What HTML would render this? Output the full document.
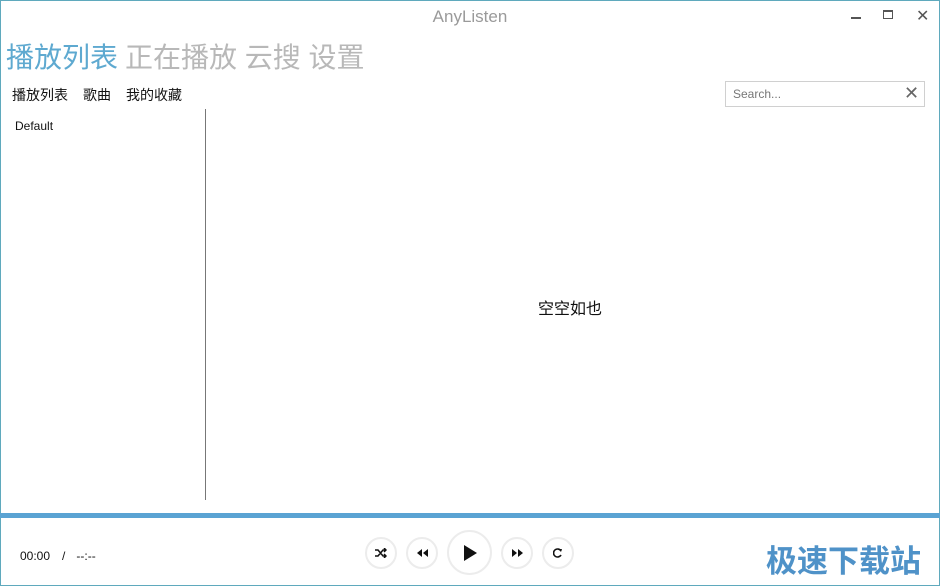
<!DOCTYPE html>
<html><head><meta charset="utf-8"><style>
*{margin:0;padding:0;box-sizing:border-box}
body{width:940px;height:586px;overflow:hidden;background:#fff;font-family:"Liberation Sans","Noto Sans CJK SC",sans-serif;position:relative}
.frame{position:absolute;left:0;top:0;width:940px;height:586px;border:1px solid #5fa9bd}
.abs{position:absolute;white-space:nowrap}
.btn{position:absolute;border-radius:50%;border:2px solid #ececec;background:#fff;display:flex;align-items:center;justify-content:center}
</style></head><body>
<div class="frame"></div>
<div class="abs" style="left:0;width:940px;top:7px;text-align:center;font-size:17px;color:#9a9a9a">AnyListen</div>
<div class="abs" style="left:851px;top:17px;width:10px;height:2px;background:#555"></div>
<div class="abs" style="left:883px;top:10px;width:10px;height:9px;border:1px solid #555;border-top:2px solid #555"></div>
<div class="abs" style="left:916px;top:6px;font-size:16px;color:#555">✕</div>
<div class="abs" style="left:6px;top:36px;font-size:28px;color:#5ea9d0">播放列表</div>
<div class="abs" style="left:125px;top:36px;font-size:28px;color:#b8b8b8">正在播放 云搜 设置</div>
<div class="abs" style="left:12px;top:85px;font-size:14px;color:#111">播放列表</div>
<div class="abs" style="left:83px;top:85px;font-size:14px;color:#111">歌曲</div>
<div class="abs" style="left:126px;top:85px;font-size:14px;color:#111">我的收藏</div>
<div class="abs" style="left:725px;top:81px;width:200px;height:26px;border:1px solid #d0d0d0"></div>
<div class="abs" style="left:733px;top:87px;font-size:12px;color:#777">Search...</div>
<div class="abs" style="left:904px;top:83px;font-size:18px;color:#666">✕</div>
<div class="abs" style="left:15px;top:119px;font-size:12px;color:#111">Default</div>
<div class="abs" style="left:205px;top:109px;width:1px;height:391px;background:#777"></div>
<div class="abs" style="left:538px;top:295px;font-size:16px;color:#111">空空如也</div>
<div class="abs" style="left:0;top:513px;width:940px;height:5px;background:#5aa3d3"></div>
<div class="abs" style="left:20px;top:549px;font-size:12px;color:#111">00:00<span style="margin:0 11px 0 12px">/</span>--:--</div>
<div class="btn" style="left:365px;top:537px;width:32px;height:32px"><svg width="12" height="10" viewBox="0 0 12 10"><path d="M0 2h3l5 6h3M0 8h3l5-6h3M9 0l2 2-2 2M9 6l2 2-2 2" stroke="#111" stroke-width="1.5" fill="none"/></svg></div>
<div class="btn" style="left:406px;top:537px;width:32px;height:32px"><svg width="11" height="8" viewBox="0 0 11 8"><path d="M5 0v8L0 4zM11 0v8L6 4z" fill="#111"/></svg></div>
<div class="btn" style="left:447px;top:530px;width:45px;height:45px"><svg width="14" height="16" viewBox="0 0 14 16"><path d="M1 0v16l13-8z" fill="#111"/></svg></div>
<div class="btn" style="left:501px;top:537px;width:32px;height:32px"><svg width="11" height="8" viewBox="0 0 11 8"><path d="M0 0v8l5-4zM6 0v8l5-4z" fill="#111"/></svg></div>
<div class="btn" style="left:542px;top:537px;width:32px;height:32px"><svg width="10" height="10" viewBox="0 0 10 10"><path d="M8 3A4 4 0 1 0 8 7" stroke="#111" stroke-width="1.6" fill="none"/><path d="M6 1l3 0-1 3z" fill="#111"/></svg></div>
<div class="abs" style="left:766px;top:536px;font-size:31px;font-weight:bold;color:#4f92c8">极速下载站</div>
</body></html>
